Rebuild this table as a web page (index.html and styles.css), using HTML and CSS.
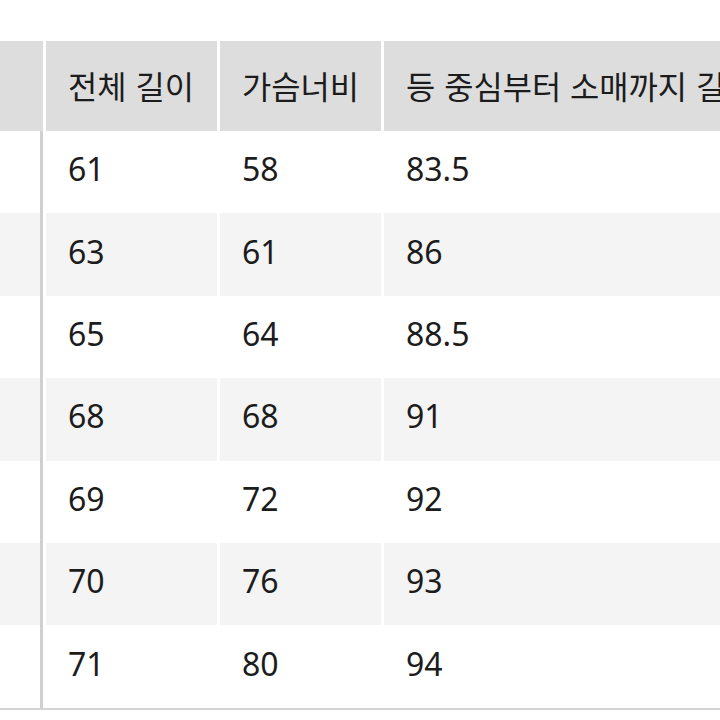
FILE: index.html
```html
<!DOCTYPE html>
<html lang="ko">
<head>
<meta charset="utf-8">
<link rel="stylesheet" href="styles.css">
</head>
<body>
<div class="sheet">
  <div class="row head">
    <div class="cell lead"></div>
    <div class="cell">전체 길이</div>
    <div class="cell">가슴너비</div>
    <div class="cell">등 중심부터 소매까지 길이</div>
  </div>
  <div class="row">
    <div class="cell lead"></div><div class="cell">61</div><div class="cell">58</div><div class="cell">83.5</div>
  </div>
  <div class="row alt">
    <div class="cell lead"></div><div class="cell">63</div><div class="cell">61</div><div class="cell">86</div>
  </div>
  <div class="row">
    <div class="cell lead"></div><div class="cell">65</div><div class="cell">64</div><div class="cell">88.5</div>
  </div>
  <div class="row alt">
    <div class="cell lead"></div><div class="cell">68</div><div class="cell">68</div><div class="cell">91</div>
  </div>
  <div class="row">
    <div class="cell lead"></div><div class="cell">69</div><div class="cell">72</div><div class="cell">92</div>
  </div>
  <div class="row alt">
    <div class="cell lead"></div><div class="cell">70</div><div class="cell">76</div><div class="cell">93</div>
  </div>
  <div class="row">
    <div class="cell lead"></div><div class="cell">71</div><div class="cell">80</div><div class="cell">94</div>
  </div>
</div>
</body>
</html>
```
FILE: styles.css
```css
html, body {
  margin: 0;
  padding: 0;
  background: #ffffff;
  overflow: hidden;
}
body {
  width: 720px;
  height: 720px;
  font-family: "Noto Sans", "Noto Sans CJK KR", sans-serif;
  color: #1c1c1c;
}
.sheet {
  margin-top: 41px;
  width: 1000px;
  border-bottom: 2px solid #d4d4d4;
}
.row {
  display: grid;
  grid-template-columns: 43px 171px 161px 600px;
  column-gap: 3px;
  height: 82.4px;
}
.row.head {
  height: 90px;
}
.cell {
  display: flex;
  align-items: center;
  padding: 0 0 7px 22px;
  box-sizing: border-box;
  font-size: 32px;
  white-space: nowrap;
}
.head .cell {
  background: #dddddd;
  font-family: "Noto Sans CJK KR", sans-serif;
  font-size: 31.8px;
  padding-bottom: 3px;
}
.alt .cell {
  background: #f4f4f4;
}
.row:not(.head) .lead {
  border-right: 3px solid #d0d0d0;
}
```
